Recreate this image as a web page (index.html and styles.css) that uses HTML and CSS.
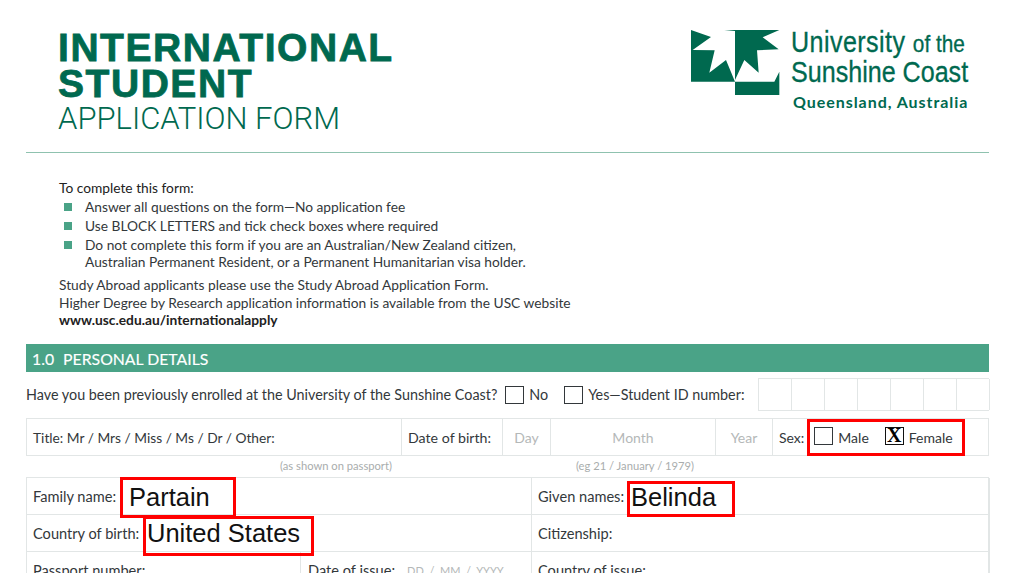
FILE: index.html
```html
<!DOCTYPE html>
<html lang="en">
<head>
<meta charset="utf-8">
<title>International Student Application Form</title>
<link rel="stylesheet" href="styles.css">
</head>
<body>
<div class="page">
  <header class="head">
    <h1 class="title"><span class="t-bold">INTERNATIONAL</span><span class="t-bold">STUDENT</span><span class="t-light">APPLICATION FORM</span></h1>
    <div class="logo">
      <svg class="mark" width="94" height="66" viewBox="0 0 282 198" aria-hidden="true">
        <path fill="#00694f" d="M0 0L60 21L5 60L71 61L55 128L105 90L132 155L0 155Z"/>
        <path fill="#00694f" d="M100 0H265L215 22L263 58L198 61L203 128L160 90L132 150V3Z"/>
        <path fill="#00694f" d="M132 155H250L265 125V195H132Z"/>
      </svg>
      <div class="logo-text">
        <div class="l1"><span class="squeeze">University <small>of the</small></span></div>
        <div class="l2"><span class="squeeze">Sunshine Coast</span></div>
        <div class="l3">Queensland, Australia</div>
      </div>
    </div>
  </header>

  <section class="intro">
    <p class="lead">To complete this form:</p>
    <ul class="list">
      <li>Answer all questions on the form—No application fee</li>
      <li>Use BLOCK LETTERS and tick check boxes where required</li>
      <li>Do not complete this form if you are an Australian/New Zealand citizen,<br>Australian Permanent Resident, or a Permanent Humanitarian visa holder.</li>
    </ul>
    <p class="para">Study Abroad applicants please use the Study Abroad Application Form.<br>Higher Degree by Research application information is available from the USC website<br><b class="url">www.usc.edu.au/internationalapply</b></p>
  </section>

  <h2 class="bar"><span class="num">1.0</span>PERSONAL DETAILS</h2>

  <div class="enrol">
    <span>Have you been previously enrolled at the University of the Sunshine Coast?</span>
    <i class="box b-no"></i><span>No</span>
    <i class="box b-yes"></i><span>Yes—Student ID number:</span>
    <div class="idcells"><i></i><i></i><i></i><i></i><i></i><i></i><i></i></div>
  </div>

  <div class="bio">
    <div class="c c-title">Title: Mr / Mrs / Miss / Ms / Dr / Other:</div>
    <div class="c c-dob">Date of birth:</div>
    <div class="c c-hint">Day</div>
    <div class="c c-hint">Month</div>
    <div class="c c-hint">Year</div>
    <div class="c c-sex">Sex:
      <i class="box b-male"></i><span class="lbl-male">Male</span>
      <i class="box b-female">X</i><span>Female</span>
      <div class="red red-sex"></div>
    </div>
  </div>

  <div class="notes"><span class="n1">(as shown on passport)</span><span class="n2">(eg 21 / January / 1979)</span></div>

  <div class="table">
    <div class="cell span2">Family name:<div class="red red-family"><span class="fill">Partain</span></div></div>
    <div class="cell">Given names:<div class="red red-given"><span class="fill">Belinda</span></div></div>
    <div class="cell span2">Country of birth:<div class="red red-country"><span class="fill">United States</span></div></div>
    <div class="cell">Citizenship:</div>
    <div class="cell">Passport number:</div>
    <div class="cell cell-issue">Date of issue: <span class="dd">DD &nbsp;/&nbsp; MM &nbsp;/&nbsp; YYYY</span></div>
    <div class="cell">Country of issue:</div>
  </div>
</div>
</body>
</html>
```
FILE: styles.css
```css
* { box-sizing: border-box; }
html, body { margin: 0; padding: 0; background: #fff; overflow: hidden; height: 573px; }
.page { width: 1024px; height: 573px; overflow: hidden; padding: 0 35px 0 26px; font-family: "Lato", "Noto Sans", sans-serif; font-size: 14px; color: #33383b; }

.head { display: flex; justify-content: space-between; height: 152px; padding: 0 20px 0 32px; }
.title { margin: 0; padding-top: 30px; display: flex; flex-direction: column; font-weight: 400; color: #00694f; font-family: "Liberation Sans", Arial, sans-serif; }
.t-bold { font-size: 39px; line-height: 36px; font-weight: 700; letter-spacing: 1.55px; -webkit-text-stroke: .8px #00694f; }
.t-light { font-family: "Roboto", sans-serif; font-weight: 300; font-size: 31px; line-height: 33px; letter-spacing: 0; }
.logo { display: flex; padding-top: 28px; gap: 6px; }
.mark { display: block; margin-top: 2px; }
.logo-text { color: #00694f; font-family: "Liberation Sans", sans-serif; width: 178px; }
.squeeze { display: inline-block; transform: scaleX(.865); transform-origin: left center; white-space: nowrap; -webkit-text-stroke: .3px #00694f; }
.l1 { font-size: 29px; line-height: 28px; letter-spacing: .5px; white-space: nowrap; }
.l1 small { font-size: 24px; letter-spacing: 0; }
.l2 { font-size: 29px; line-height: 28px; white-space: nowrap; }
.l3 { font-family: "Lato", sans-serif; font-size: 16px; font-weight: 700; line-height: 22px; letter-spacing: .95px; margin: 5px 0 0 2px; white-space: nowrap; }

.intro { border-top: 1.5px solid #8fc2af; padding: 26px 0 0 33px; height: 192px; font-size: 13.75px; }
.lead { margin: 0; line-height: 18px; color: #222; }
.list { list-style: none; margin: 1px 0 0; padding: 0 0 0 26px; }
.list li { position: relative; line-height: 17px; padding-bottom: 2px; }
.list li::before { content: ""; position: absolute; left: -21px; top: 5px; width: 8px; height: 8px; background: #4aa387; }
.para { margin: 4px 0 0; line-height: 17.5px; }
.url { font-weight: 700; color: #222; }

.bar { display: flex; margin: 0; height: 28px; background: #4aa387; color: #fff; font-size: 15.8px; line-height: 30px; font-weight: 400; padding-left: 6px; -webkit-text-stroke: .15px #fff; }
.num { margin-right: 9px; }

.enrol { display: flex; align-items: center; height: 33px; margin-top: 6px; font-size: 14.35px; white-space: nowrap; }
.box { display: block; flex: none; width: 19px; height: 18px; border: 1.5px solid #33383b; background: #fff; }
.b-no { margin: 0 5px 0 8px; }
.b-yes { margin: 0 5px 0 16px; }
.idcells { margin-left: auto; display: grid; grid-template-columns: repeat(7, 33px); height: 33px; border: 1px solid #e2e6e6; border-right: 0; width: 231px; flex: none; }
.idcells i { border-right: 1px solid #e2e6e6; }

.bio { display: grid; grid-template-columns: 375px 101px 48px 165px 57px 1fr; height: 38px; margin-top: 7px; border: 1px solid #e2e6e6; font-size: 14px; }
.c { display: flex; align-items: center; border-right: 1px solid #e2e6e6; padding-left: 6px; white-space: nowrap; }
.c-title { font-size: 13.75px; }
.c-dob { font-size: 14.2px; }
.c-sex { border-right: 0; position: relative; }
.c-hint { justify-content: center; padding: 0; color: #b4b8b8; }
.b-male { margin: 0 5px 0 10px; position: relative; top: -1px; }
.lbl-male { margin-right: 16px; }
.b-female { margin-right: 5px; position: relative; top: -1px; border-color: #111; font: 700 20px/15px "Liberation Serif", serif; text-align: center; color: #000; }
.red { position: absolute; border: 3px solid #f00; }
.red-sex { left: 34px; top: 0; width: 158px; height: 37px; }
.fill { font: 400 25.5px/1 "Liberation Sans", Arial, sans-serif; color: #111; white-space: nowrap; }

.notes { display: flex; height: 21px; font-size: 11.2px; color: #a9adad; line-height: 20px; }
.n1 { margin-left: 254px; }
.n2 { margin-left: 184px; }

.table { display: grid; grid-template-columns: 274px 231px 458px; grid-auto-rows: 37px; border: 1px solid #e2e6e6; border-bottom: 0; font-size: 14.6px; }
.cell { position: relative; display: flex; align-items: center; padding-left: 6px; border-right: 1px solid #e2e6e6; border-bottom: 1px solid #e2e6e6; white-space: nowrap; }
.cell-issue { padding-left: 7px; }
.span2 { grid-column: span 2; }
.dd { font-size: 11px; color: #b4b8b8; margin-left: 12px; }
.red-family { left: 93px; top: -1px; width: 116px; height: 41px; padding: 5px 0 0 6px; }
.red-given { left: 95px; top: 3px; width: 108px; height: 36px; padding: 1px 0 0 1px; }
.red-country { left: 116px; top: 1px; width: 171px; height: 40px; padding: 2px 0 0 1px; z-index: 1; }
```
